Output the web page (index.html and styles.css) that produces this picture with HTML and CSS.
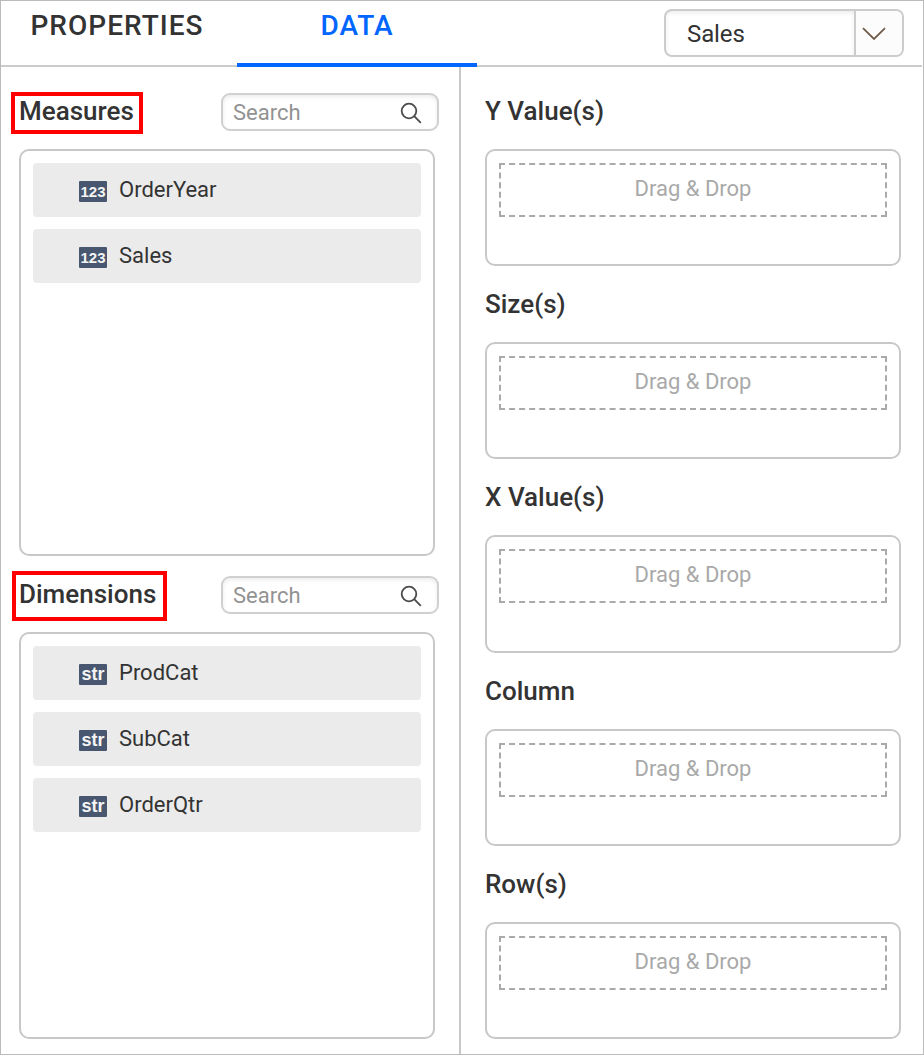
FILE: index.html
```html
<!DOCTYPE html>
<html lang="en">
<head>
<meta charset="utf-8">
<title>Data configuration</title>
<link rel="stylesheet" href="styles.css">
</head>
<body>
<div class="panel">
  <header class="header">
    <nav class="tabs">
      <div class="tab">PROPERTIES</div>
      <div class="tab tab-active">DATA</div>
    </nav>
    <div class="select">
      <span class="select-value">Sales</span>
      <span class="select-button"><svg width="24" height="14" viewBox="0 0 24 14"><path d="M1 1.2 12 12 23 1.2"/></svg></span>
    </div>
  </header>
  <main class="columns">
    <section class="fields">
      <div class="field-head">
        <h2 class="marked marked-measures">Measures</h2>
        <div class="search"><span>Search</span><svg width="22" height="22" viewBox="0 0 22 22"><circle cx="9" cy="9" r="7.3"/><path d="M14.2 14.2 20.8 20.8"/></svg></div>
      </div>
      <div class="field-list">
        <div class="field"><span class="badge badge-num">123</span><span>OrderYear</span></div>
        <div class="field"><span class="badge badge-num">123</span><span>Sales</span></div>
      </div>
      <div class="field-head field-head-next">
        <h2 class="marked marked-dimensions">Dimensions</h2>
        <div class="search"><span>Search</span><svg width="22" height="22" viewBox="0 0 22 22"><circle cx="9" cy="9" r="7.3"/><path d="M14.2 14.2 20.8 20.8"/></svg></div>
      </div>
      <div class="field-list">
        <div class="field"><span class="badge badge-str">str</span><span>ProdCat</span></div>
        <div class="field"><span class="badge badge-str">str</span><span>SubCat</span></div>
        <div class="field"><span class="badge badge-str">str</span><span>OrderQtr</span></div>
      </div>
    </section>
    <section class="targets">
      <div class="target"><h2>Y Value(s)</h2><div class="target-box"><div class="drop">Drag &amp; Drop</div></div></div>
      <div class="target"><h2>Size(s)</h2><div class="target-box"><div class="drop">Drag &amp; Drop</div></div></div>
      <div class="target target-x"><h2>X Value(s)</h2><div class="target-box"><div class="drop">Drag &amp; Drop</div></div></div>
      <div class="target"><h2>Column</h2><div class="target-box"><div class="drop">Drag &amp; Drop</div></div></div>
      <div class="target"><h2>Row(s)</h2><div class="target-box"><div class="drop">Drag &amp; Drop</div></div></div>
    </section>
  </main>
</div>
</body>
</html>
```
FILE: styles.css
```css
* { box-sizing: border-box; }
body {
  margin: 0;
  background: #fff;
  color: #333;
  font-family: Roboto, "Liberation Sans", sans-serif;
}
h2 { margin: 0; font-size: 26px; font-weight: 500; line-height: 30px; white-space: nowrap; }
svg { display: block; fill: none; }

.panel {
  display: flex;
  flex-direction: column;
  width: 924px;
  height: 1055px;
  border: 1px solid #bbb;
}
.header {
  display: flex;
  justify-content: space-between;
  height: 66px;
  margin-right: 1px;
  border-bottom: 2px solid #ccc;
}
.tabs { display: flex; height: 66px; }
.tab {
  display: flex;
  justify-content: center;
  width: 240px;
  padding-top: 8px;
  font-size: 28px;
  font-weight: 500;
  line-height: 33px;
  letter-spacing: 1px;
}
.tab:first-child { width: 236px; justify-content: flex-start; padding-left: 29.5px; }
.tab-active { color: #06f; border-bottom: 4px solid #06f; }
.select {
  display: flex;
  width: 240px;
  height: 48px;
  margin: 8px 18px 0 0;
  border: 2px solid #ccc;
  border-radius: 8px;
  overflow: hidden;
}
.select-value {
  flex: 1;
  padding: 9px 0 0 21px;
  font-size: 24px;
  line-height: 28px;
  letter-spacing: -0.1px;
  box-shadow: inset 0 2px 4px rgba(0, 0, 0, 0.08);
}
.select-button { width: 48px; padding: 16px 0 0 6px; border-left: 2px solid #ccc; background: #fcfcfc; }
.select-button svg { stroke: #6f5c4a; stroke-width: 1.8; }

.columns { display: flex; flex: 1; }
.fields { width: 460px; padding-left: 18px; border-right: 2px solid #c8c8c8; }
.field-head { display: flex; justify-content: space-between; height: 82px; padding: 26px 20px 0 0; }
.field-head-next { height: 76px; padding-top: 20px; }
.marked { border: 4px solid #f00; }
.marked-measures { width: 132px; height: 42px; margin: -1px 0 0 -8px; padding: 0 0 0 4px; }
.marked-dimensions { width: 155px; height: 50px; margin: -5px 0 0 -7px; padding: 4px 0 0 3px; }
.search {
  display: flex;
  justify-content: space-between;
  width: 218px;
  height: 38px;
  padding: 4px 15px 0 10px;
  border: 2px solid #d0d0d0;
  border-radius: 9px;
  box-shadow: inset 0 2px 4px rgba(0, 0, 0, 0.08);
  color: #929292;
  font-size: 22px;
  line-height: 27px;
}
.search svg { margin-top: 3px; stroke: #4a4a4a; stroke-width: 1.8; }
.field-list {
  display: flex;
  flex-direction: column;
  gap: 12px;
  width: 416px;
  height: 407px;
  padding: 12px;
  border: 2px solid #c8c8c8;
  border-radius: 10px;
}
.field {
  display: flex;
  gap: 12px;
  height: 54px;
  padding: 14px 0 0 46px;
  border-radius: 4px;
  background: #ebebeb;
  font-size: 22px;
  line-height: 26px;
}
.badge {
  width: 28px;
  height: 21px;
  margin-top: 4px;
  border-radius: 1px;
  background: #48566f;
  color: #f4f4f4;
  font-family: "Liberation Sans", sans-serif;
  font-weight: 700;
  text-align: center;
}
.badge-num { font-size: 15px; line-height: 21px; }
.badge-str { font-size: 18px; line-height: 21px; }

.targets { padding-left: 24px; }
.target h2 { height: 76px; padding-top: 23px; }
.target:first-child h2 { height: 82px; padding-top: 29px; }
.target-box { width: 416px; height: 117px; padding: 12px; border: 2px solid #c8c8c8; border-radius: 10px; }
.target-x .target-box { height: 118px; }
.drop {
  height: 54px;
  padding-top: 11px;
  border: 2px dashed #aaa;
  color: #a9a9a9;
  font-size: 22px;
  line-height: 26px;
  text-align: center;
}
```
